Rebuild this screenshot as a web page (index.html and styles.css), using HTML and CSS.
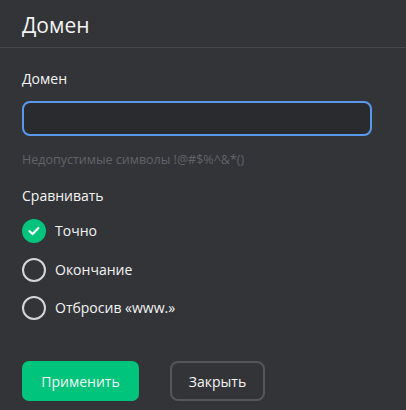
FILE: index.html
```html
<!DOCTYPE html>
<html lang="ru">
<head>
<meta charset="utf-8">
<title>Домен</title>
<link rel="stylesheet" href="styles.css">
</head>
<body>
<div class="dialog">
  <div class="header">
    <h1 class="title">Домен</h1>
  </div>
  <div class="content">
    <label class="label" for="domain">Домен</label>
    <input class="input" id="domain" type="text">
    <div class="hint">Недопустимые символы !@#$%^&amp;*()</div>
    <div class="group-title">Сравнивать</div>
    <div class="radios">
      <div class="radio">
        <span class="circle checked">
          <svg width="12" height="10" viewBox="0 0 12 10"><path d="M1.6 5.2 L4.6 8 L10.4 2" fill="none" stroke="#fff" stroke-width="2.2" stroke-linecap="round" stroke-linejoin="round"/></svg>
        </span>
        <span class="radio-text">Точно</span>
      </div>
      <div class="radio">
        <span class="circle"></span>
        <span class="radio-text">Окончание</span>
      </div>
      <div class="radio">
        <span class="circle"></span>
        <span class="radio-text">Отбросив «www.»</span>
      </div>
    </div>
    <div class="buttons">
      <button class="btn btn-primary">Применить</button>
      <button class="btn btn-secondary">Закрыть</button>
    </div>
  </div>
</div>
</body>
</html>
```

FILE: styles.css
```css
html, body {
  margin: 0;
  padding: 0;
  background: #333438;
}
body {
  font-family: "Open Sans", "Noto Sans", sans-serif;
  color: #f2f2f2;
}
.dialog {
  width: 406px;
  height: 410px;
}
.header {
  height: 48px;
  box-sizing: border-box;
  padding: 11px 22px 0;
  border-bottom: 1px solid #46474b;
}
.title {
  margin: 0;
  font-size: 21px;
  line-height: 28px;
  font-weight: 400;
  color: #f4f4f4;
}
.content {
  padding: 21px 22px 0;
  display: flex;
  flex-direction: column;
  align-items: flex-start;
}
.label {
  font-size: 14px;
  line-height: 20px;
  font-weight: 500;
  color: #f4f4f4;
  margin-bottom: 12px;
}
.input {
  width: 350px;
  height: 35px;
  box-sizing: border-box;
  margin: 0;
  border: 2px solid #5a98ec;
  border-radius: 8px;
  background: #2a2b2f;
  outline: none;
  color: #fff;
  font: inherit;
  padding: 0 10px;
}
.hint {
  margin-top: 15px;
  font-size: 12.5px;
  line-height: 18px;
  color: #616368;
}
.group-title {
  margin-top: 17px;
  font-size: 14px;
  line-height: 20px;
  color: #f4f4f4;
}
.radios {
  margin-top: 13px;
  display: flex;
  flex-direction: column;
  gap: 14.5px;
}
.radio {
  display: flex;
  align-items: center;
  height: 24px;
  gap: 9px;
}
.circle {
  width: 24px;
  height: 24px;
  box-sizing: border-box;
  border: 2px solid #d6d6d8;
  border-radius: 50%;
  display: flex;
  align-items: center;
  justify-content: center;
}
.circle.checked {
  border: none;
  background: #00c47c;
}
.radio-text {
  font-size: 14px;
  line-height: 20px;
  color: #f4f4f4;
}
.buttons {
  margin-top: 41px;
  display: flex;
  gap: 31px;
}
.btn {
  height: 40px;
  box-sizing: border-box;
  font-family: inherit;
  font-size: 14px;
  color: #f4f4f4;
  cursor: pointer;
  padding: 0;
}
.btn-primary {
  width: 117px;
  background: #00c47c;
  border: none;
  border-radius: 7px;
}
.btn-secondary {
  width: 95px;
  background: transparent;
  border: 2px solid #55565a;
  border-radius: 8px;
}
```
